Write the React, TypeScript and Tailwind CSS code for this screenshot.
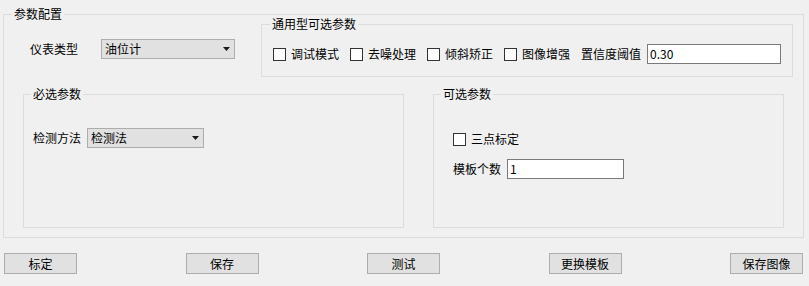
import type { ReactNode } from "react";

const FONT = "font-['Noto_Sans_CJK_SC','Noto_Sans',sans-serif]";

function GroupBox({
  title,
  className,
  titleLeft = "left-[7px]",
  children,
}: {
  title: string;
  className: string;
  titleLeft?: string;
  children?: ReactNode;
}) {
  return (
    <div className={`relative shrink-0 border border-[#dcdcdc] ${className}`}>
      <span
        className={`absolute -top-[8px] ${titleLeft} bg-[#f0f0f0] px-[2px] leading-[14px] whitespace-nowrap`}
      >
        {title}
      </span>
      {children}
    </div>
  );
}

function ComboBox({ value, width }: { value: string; width: string }) {
  return (
    <div
      className={`flex h-[20px] ${width} shrink-0 items-center justify-between border border-[#adadad] bg-[#e1e1e1] pl-[3px] pr-[4px]`}
    >
      <span className="leading-[14px]">{value}</span>
      <svg width="7" height="4" viewBox="0 0 7 4">
        <path d="M0 0h7L3.5 4z" fill="#1a1a1a" />
      </svg>
    </div>
  );
}

function CheckBox({ label }: { label: string }) {
  return (
    <label className="flex shrink-0 items-center gap-[5px]">
      <span className="h-[13px] w-[13px] shrink-0 border border-[#333333] bg-white" />
      <span className="leading-[14px] whitespace-nowrap">{label}</span>
    </label>
  );
}

function TextBox({ value, width }: { value: string; width: string }) {
  return (
    <div
      className={`flex h-[20px] ${width} shrink-0 items-center border border-[#7a7a7a] bg-white pl-[2px]`}
    >
      <span className="leading-[14px]">{value}</span>
    </div>
  );
}

function Button({ label }: { label: string }) {
  return (
    <button className="flex h-[21px] w-[73px] items-center justify-center border border-[#adadad] bg-[#e1e1e1] leading-[14px]">
      {label}
    </button>
  );
}

export default function App() {
  return (
    <div
      className={`flex h-[286px] w-[809px] flex-col bg-[#f0f0f0] text-[12px] text-black ${FONT}`}
    >
      <GroupBox
        title="参数配置"
        titleLeft="left-[8px]"
        className="ml-[3px] mt-[14px] h-[224px] w-[801px]"
      >
        <div className="flex items-start pt-[9px]">
          <div className="mt-[15px] flex items-center gap-[23px] pl-[26px]">
            <span className="leading-[14px]">仪表类型</span>
            <ComboBox value="油位计" width="w-[134px]" />
          </div>
          <GroupBox
            title="通用型可选参数"
            titleLeft="left-[8px]"
            className="ml-[26px] h-[53px] w-[532px]"
          >
            <div className="mt-[19px] flex h-[20px] items-center gap-[11px] pl-[11px]">
              <CheckBox label="调试模式" />
              <CheckBox label="去噪处理" />
              <CheckBox label="倾斜矫正" />
              <CheckBox label="图像增强" />
              <div className="flex items-center gap-[6px]">
                <span className="leading-[14px]">置信度阈值</span>
                <TextBox value="0.30" width="w-[134px]" />
              </div>
            </div>
          </GroupBox>
        </div>

        <div className="mt-[17px] flex gap-[29px] pl-[19px]">
          <GroupBox title="必选参数" className="h-[134px] w-[381px]">
            <div className="mt-[33px] flex items-center gap-[6px] pl-[9px]">
              <span className="leading-[14px]">检测方法</span>
              <ComboBox value="检测法" width="w-[117px]" />
            </div>
          </GroupBox>
          <GroupBox title="可选参数" className="h-[134px] w-[351px]">
            <div className="mt-[37px] flex h-[14px] items-center pl-[19px]">
              <CheckBox label="三点标定" />
            </div>
            <div className="mt-[13px] flex items-center gap-[6px] pl-[19px]">
              <span className="leading-[14px]">模板个数</span>
              <TextBox value="1" width="w-[117px]" />
            </div>
          </GroupBox>
        </div>
      </GroupBox>

      <div className="mt-[15px] flex justify-between pl-[4px] pr-[6px]">
        <Button label="标定" />
        <Button label="保存" />
        <Button label="测试" />
        <Button label="更换模板" />
        <Button label="保存图像" />
      </div>
    </div>
  );
}
